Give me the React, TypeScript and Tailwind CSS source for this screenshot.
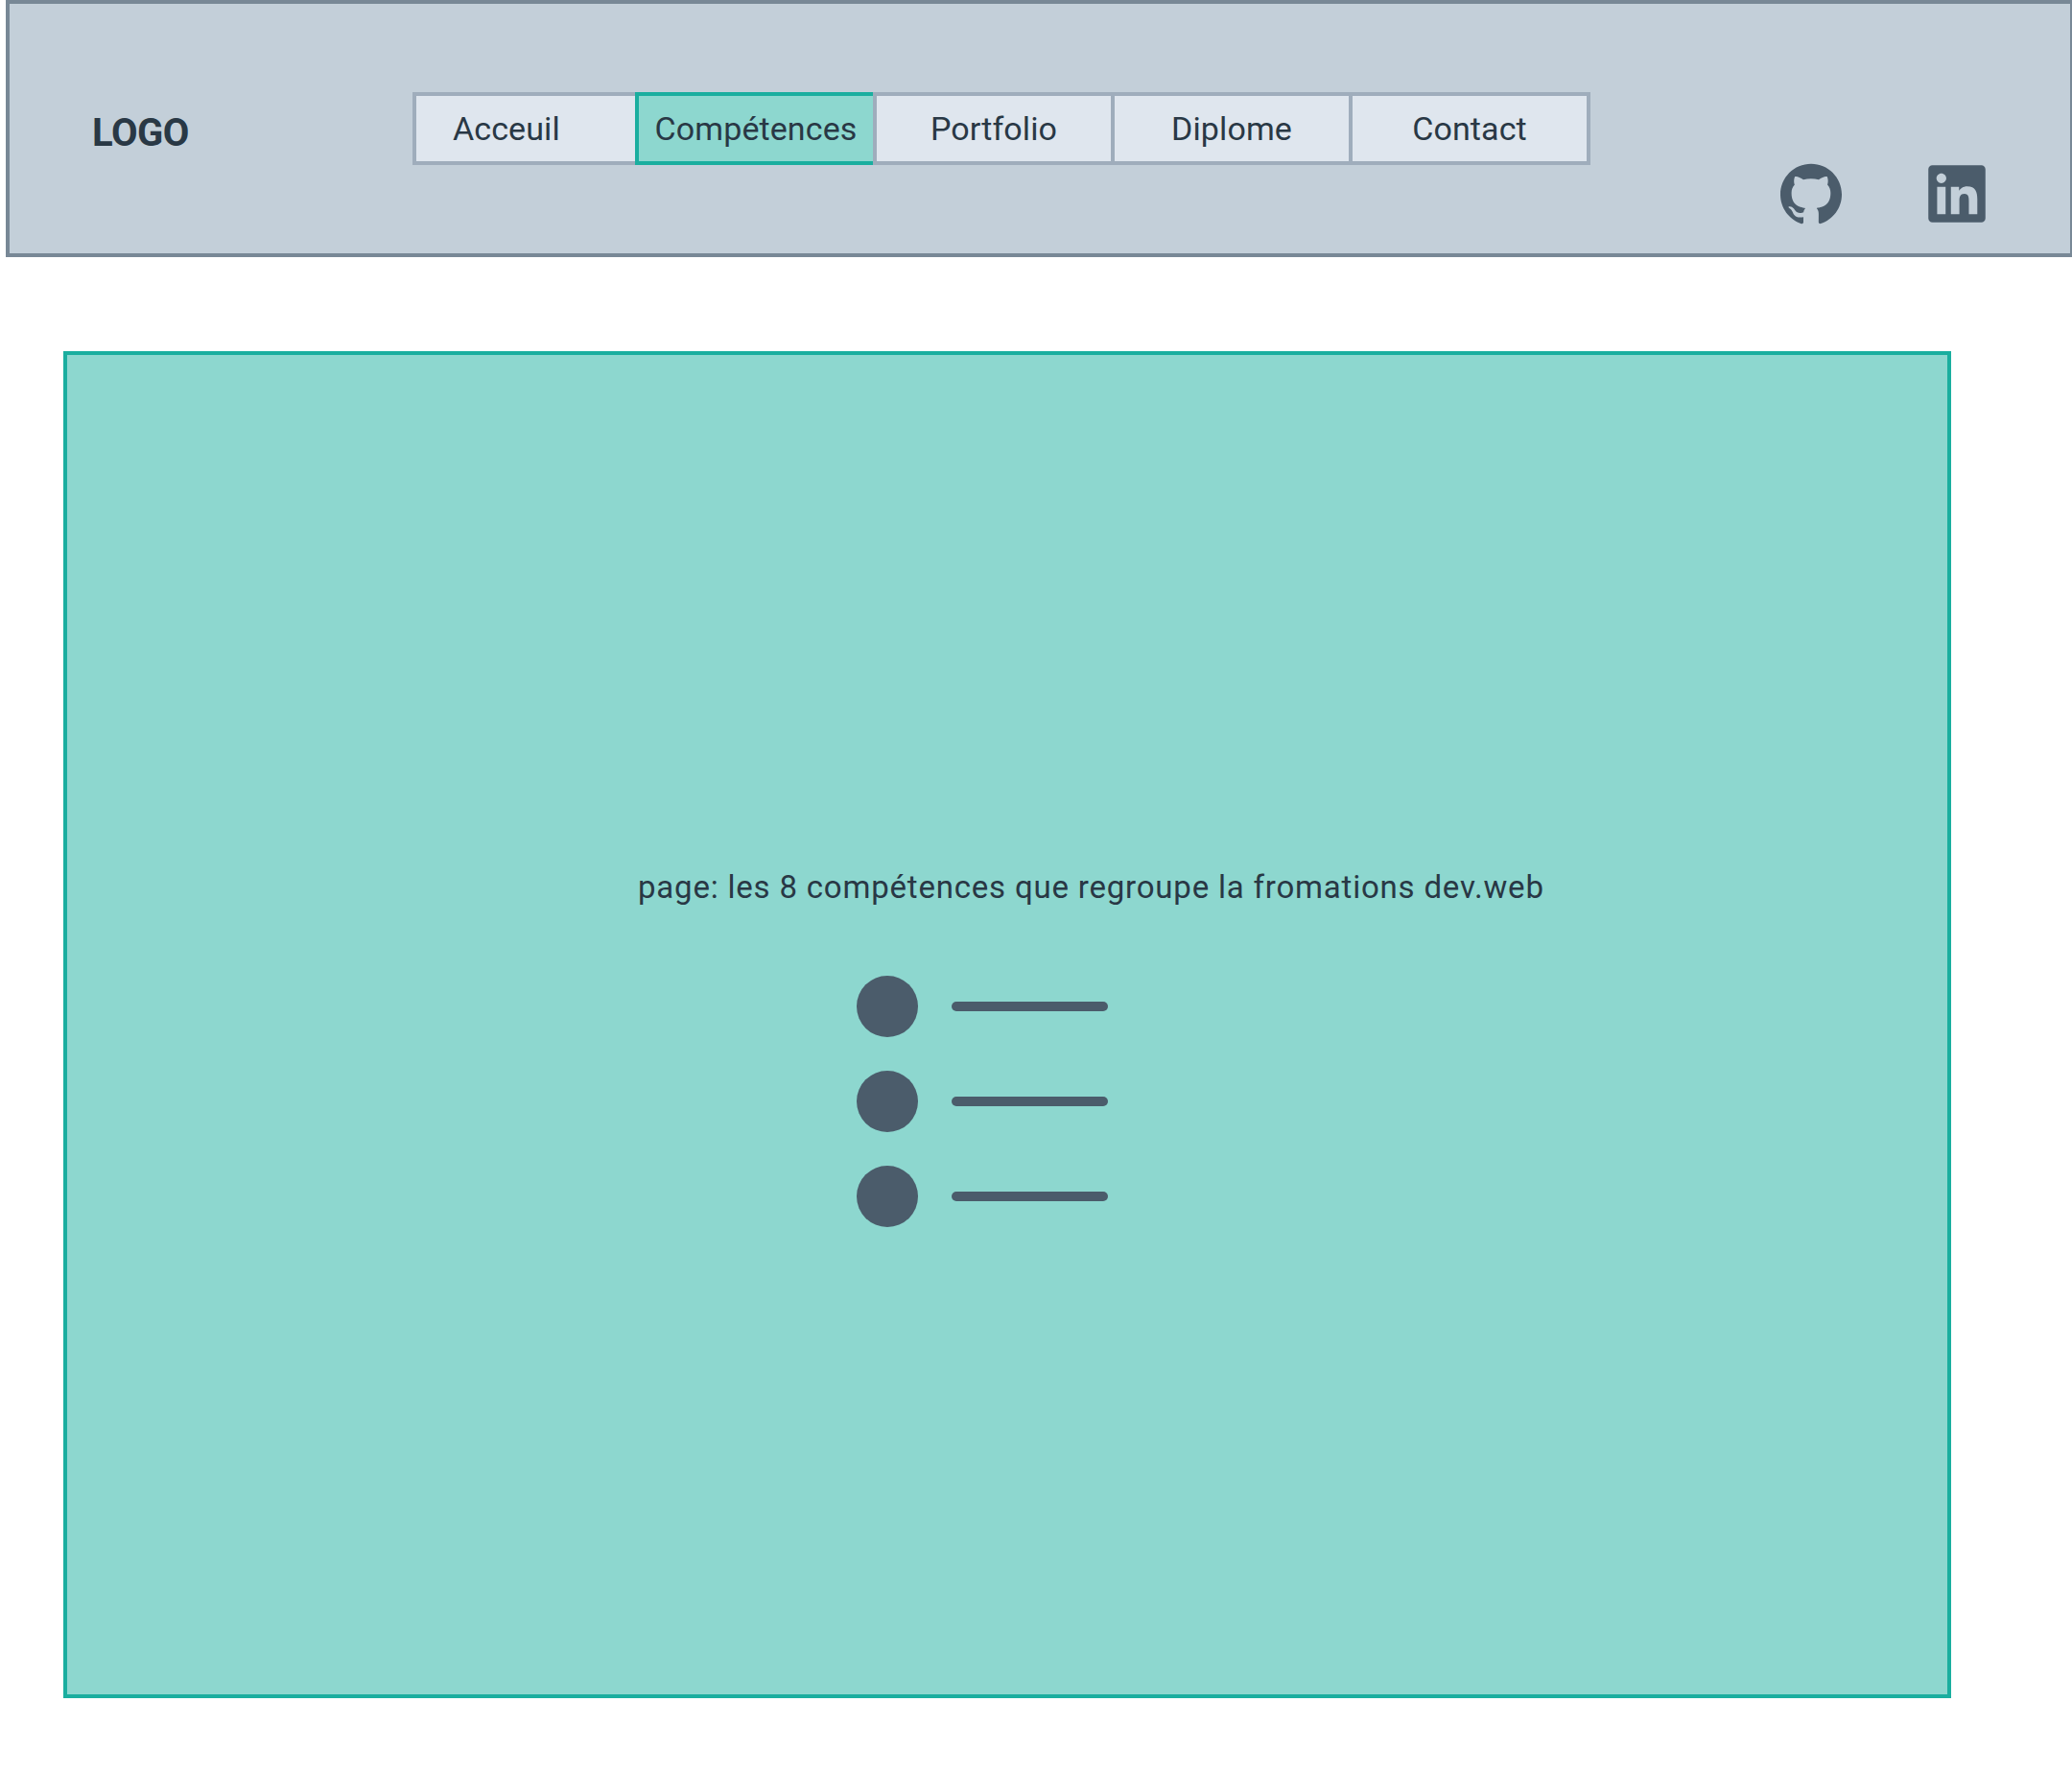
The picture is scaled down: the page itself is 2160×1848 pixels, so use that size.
import React from 'react';
import { SiGithub } from 'react-icons/si';
import { FaLinkedin } from 'react-icons/fa';

const font = "font-['Roboto',sans-serif]";

const navItems = [
  { label: 'Acceuil', width: 'w-[236px]', extra: 'justify-start pl-[38px]' },
  { label: 'Compétences', width: 'w-[252px] -ml-[4px]', extra: 'justify-center', active: true },
  { label: 'Portfolio', width: 'w-[252px] -ml-[4px]', extra: 'justify-center' },
  { label: 'Diplome', width: 'w-[252px] -ml-[4px]', extra: 'justify-center' },
  { label: 'Contact', width: 'w-[252px] -ml-[4px]', extra: 'justify-center' },
];

const App: React.FC = () => {
  return (
    <div className={`w-[2160px] h-[1848px] overflow-hidden bg-white ${font}`}>
      {/* Header */}
      <header className="ml-[6px] w-[2154px] h-[268px] flex bg-[#c3cfd9] border-4 border-r-2 border-[#788896]">
        <div className="w-[420px] pl-[86px] pt-[111px] text-[40px] leading-[48px] font-bold tracking-[-0.5px] text-[#293845]">
          LOGO
        </div>
        <nav className="flex h-[76px] mt-[92px]">
          {/* later items sit on top, so Portfolio's border covers the teal right edge */}
          {navItems.map((item) => (
            <div
              key={item.label}
              className={`relative flex items-center h-[76px] border-4 text-[34px] tracking-[0.1px] text-[#293845] ${item.width} ${item.extra} ${
                item.active ? 'bg-[#8dd7cf] border-[#1aae9f]' : 'bg-[#dfe6ee] border-[#9fadbc]'
              }`}
            >
              {item.label}
            </div>
          ))}
        </nav>
        <div className="flex items-start ml-[198px] pt-[166px] gap-[90px] text-[#4b5c6b]">
          <SiGithub className="w-[64px] h-[64px]" />
          <FaLinkedin className="w-[60px] h-[68px] -mt-[2px]" />
        </div>
      </header>

      {/* Main panel */}
      <main className="ml-[66px] mt-[98px] w-[1968px] h-[1404px] border-4 border-[#1aae9f] bg-[#8dd7cf] pl-[595px] pt-[531px]">
        <p className="text-[33px] leading-[48px] tracking-[0.8px] text-[#293845]">
          page: les 8 compétences que regroupe la fromations dev.web
        </p>
        <div className="flex flex-col gap-[35px] mt-[68px] ml-[228px]">
          {[0, 1, 2].map((i) => (
            <div key={i} className="flex items-center gap-[35px]">
              <div className="w-[64px] h-[64px] rounded-full bg-[#4b5c6b]" />
              <div className="w-[163px] h-[10px] rounded-full bg-[#4b5c6b]" />
            </div>
          ))}
        </div>
      </main>
    </div>
  );
};

export default App;
